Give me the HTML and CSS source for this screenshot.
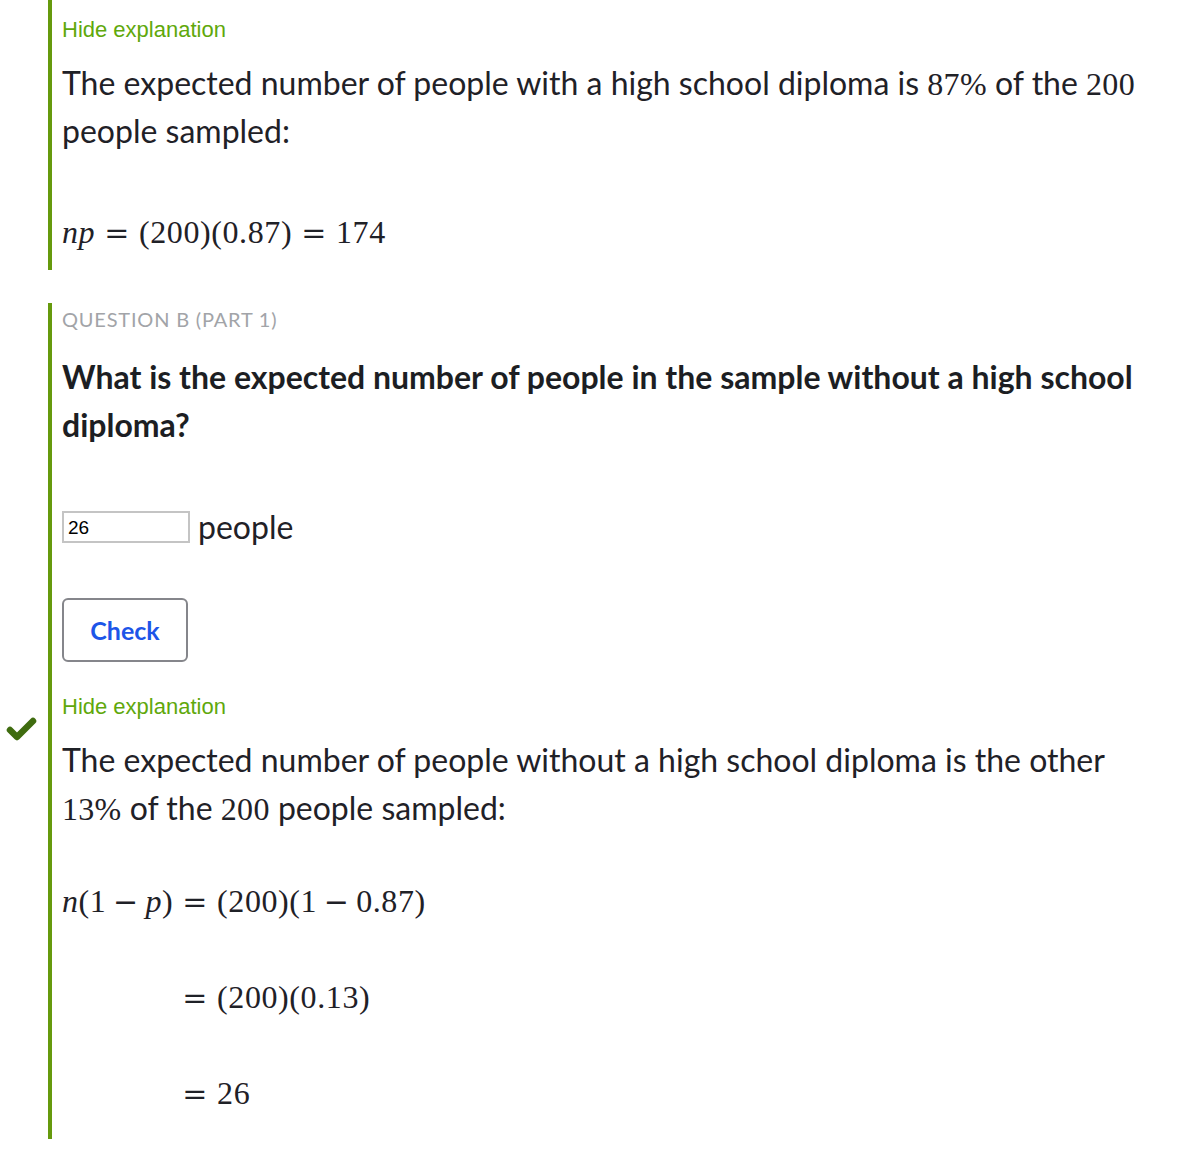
FILE: index.html
```html
<!DOCTYPE html>
<html>
<head>
<meta charset="utf-8">
<link rel="stylesheet" href="styles.css">
</head>
<body>
<section class="block block-top">
  <p class="hide">Hide explanation</p>
  <p class="para">The expected number of people with a high school diploma is <span class="m">87%</span> of the <span class="m">200</span> people sampled:</p>
  <div class="math-line"><i>np</i><span class="rel">=</span>(200)(0.87)<span class="rel">=</span>174</div>
</section>

<section class="block block-q">
  <p class="qlabel">QUESTION B (PART 1)</p>
  <p class="question">What is the expected number of people in the sample without a high school diploma?</p>
  <div class="answer-row">
    <input class="answer" type="text" value="26">
    <span class="unit">people</span>
  </div>
  <button class="check">Check</button>
  <svg class="tick" width="32" height="26" viewBox="0 0 32 26"><polyline points="4,13 11,20 27,4" fill="none" stroke="#3f6c0f" stroke-width="6.5" stroke-linecap="round" stroke-linejoin="round"/></svg>
  <p class="hide hide2">Hide explanation</p>
  <p class="para">The expected number of people without a high school diploma is the other <span class="m">13%</span> of the <span class="m">200</span> people sampled:</p>
  <div class="align">
    <span class="lhs"><i>n</i>(1<span class="bin">−</span><i>p</i>)</span>
    <span class="rhs"><span class="rel">=</span>(200)(1<span class="bin">−</span>0.87)</span>
    <span class="lhs"></span>
    <span class="rhs"><span class="rel">=</span>(200)(0.13)</span>
    <span class="lhs"></span>
    <span class="rhs"><span class="rel">=</span>26</span>
  </div>
</section>
</body>
</html>
```

FILE: styles.css
```css
html, body {
  margin: 0;
  padding: 0;
  background: #ffffff;
}

body {
  font-family: Lato, "Open Sans", sans-serif;
  color: #1f2127;
  width: 1194px;
}

.block {
  margin-left: 48px;
  border-left: 4px solid #669a0d;
  padding-left: 10px;
  padding-right: 40px;
}

.block-top {
  padding-top: 15px;
  padding-bottom: 14px;
}

.block-q {
  position: relative;
  margin-top: 33px;
  padding-top: 4px;
  padding-bottom: 22px;
}

.hide {
  margin: 0;
  font-family: "Liberation Sans", Arial, sans-serif;
  font-size: 22px;
  line-height: 30px;
  height: 30px;
  color: #60a80b;
}

.hide2 {
  margin-top: 30px;
}

.para {
  margin: 14px 0 0 0;
  font-size: 32px;
  line-height: 48px;
}

.m {
  font-family: "Liberation Serif", "Times New Roman", serif;
  font-size: 32px;
  line-height: 1;
  letter-spacing: 0.3px;
}

.math-line,
.align {
  font-family: "Liberation Serif", "Times New Roman", serif;
  font-size: 32px;
  letter-spacing: 0.6px;
  line-height: 48px;
}

.math-line i,
.align i {
  font-style: italic;
}

.rel,
.bin {
  font-family: "DejaVu Serif", serif;
  font-size: 30px;
  line-height: 1;
}

.rel {
  margin: 0 0.3em;
}

.bin {
  margin: 0 0.22em;
}

.math-line {
  margin-top: 53px;
  height: 48px;
}

.qlabel {
  margin: 0;
  font-size: 20px;
  line-height: 24px;
  height: 24px;
  letter-spacing: 0.8px;
  color: #a2a4a8;
}

.question {
  margin: 22px 0 0 0;
  font-size: 32px;
  font-weight: 700;
  line-height: 48px;
  color: #1c1e23;
}

.answer-row {
  margin-top: 54px;
  height: 48px;
  display: flex;
  align-items: center;
  gap: 8px;
}

.answer {
  box-sizing: border-box;
  width: 128px;
  height: 32px;
  margin: 0;
  border: 2px solid #c4c4c4;
  padding: 2px 4px 0;
  font-family: "Liberation Sans", Arial, sans-serif;
  font-size: 19px;
  color: #000;
  background: #fff;
}

.unit {
  font-size: 32px;
  line-height: 48px;
}

.check {
  display: block;
  box-sizing: border-box;
  margin-top: 47px;
  width: 126px;
  height: 64px;
  border: 2px solid #85868b;
  border-radius: 6px;
  background: #fff;
  font-family: Lato, sans-serif;
  font-size: 25px;
  font-weight: 700;
  color: #1d55e8;
  padding: 0;
}

.tick {
  position: absolute;
  left: -46px;
  top: 414px;
}

.align {
  margin-top: 45px;
  display: grid;
  grid-template-columns: max-content max-content;
  row-gap: 48px;
}

.align > span {
  height: 48px;
}

.lhs {
  text-align: right;
}
```
